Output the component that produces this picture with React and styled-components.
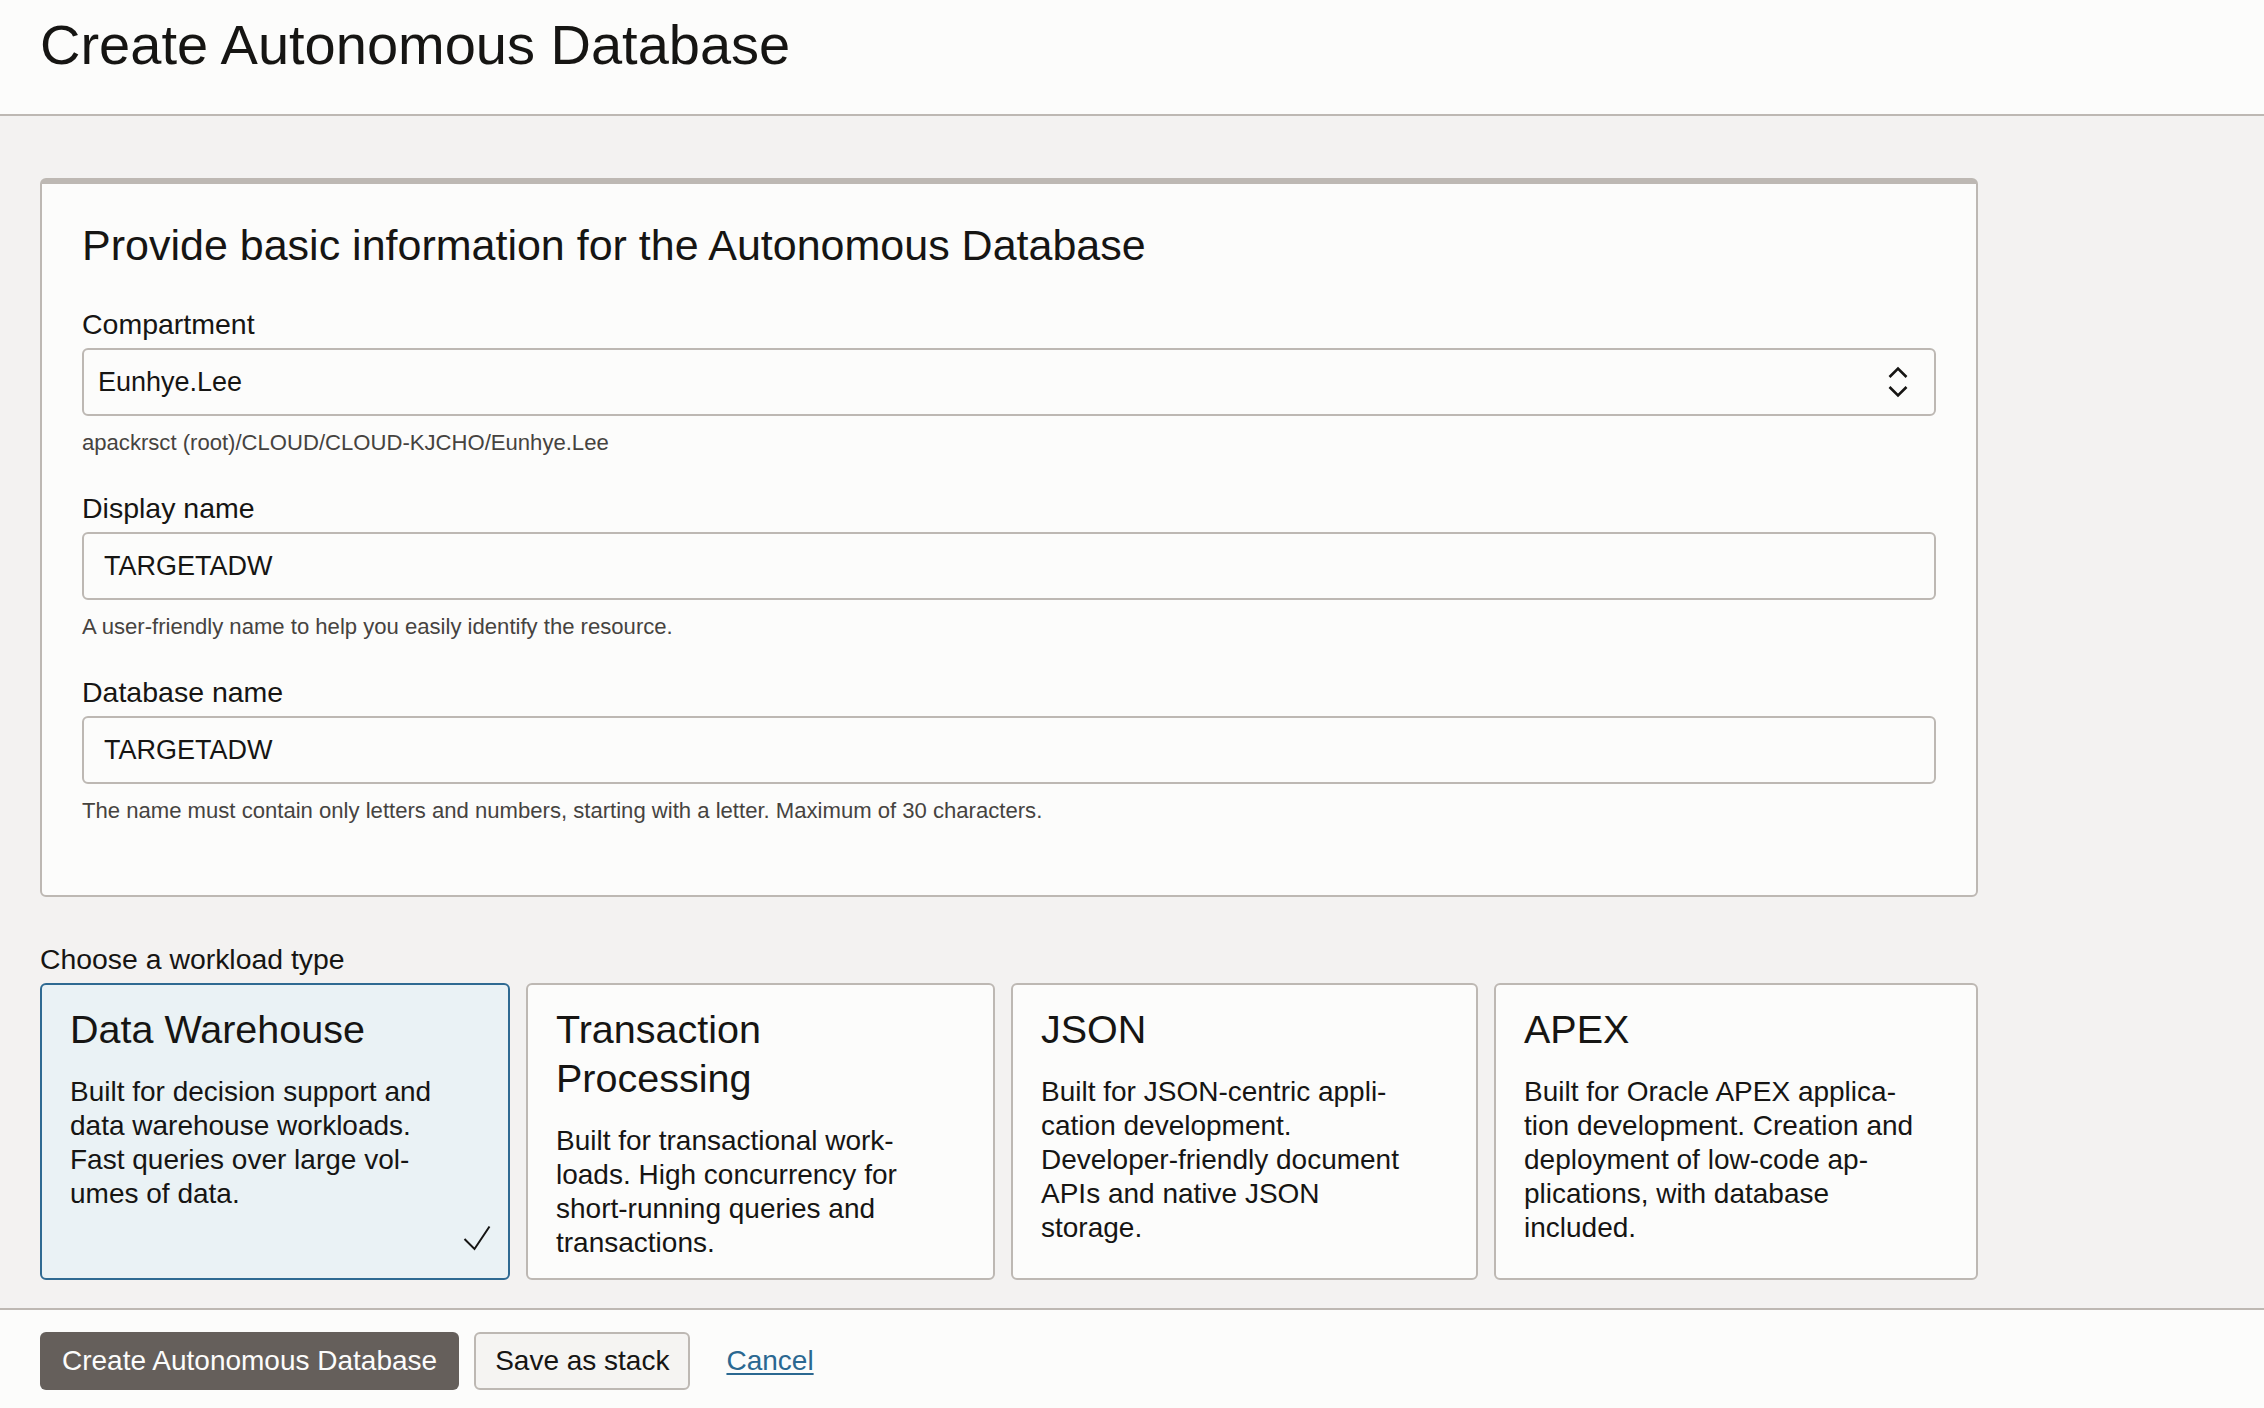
import styled, { createGlobalStyle } from 'styled-components';

const GlobalStyle = createGlobalStyle`
  html, body {
    margin: 0;
    padding: 0;
  }
  body {
    font-family: 'Liberation Sans', Arial, Helvetica, sans-serif;
    color: #161513;
    background: #f3f2f1;
  }
  * {
    box-sizing: border-box;
  }
`;

const Page = styled.div`
  display: flex;
  flex-direction: column;
  height: 100vh;
  overflow: hidden;
`;

const Header = styled.header`
  background: #fcfcfb;
  border-bottom: 2px solid #bdb8b3;
  padding: 13px 40px 37px;
`;

const Title = styled.h1`
  margin: 0;
  font-size: 56px;
  line-height: 64px;
  font-weight: 400;
`;

const Main = styled.main`
  flex: 1;
  padding: 62px 40px 0;
  overflow: hidden;
`;

const Content = styled.div`
  width: 1938px;
  display: flex;
  flex-direction: column;
`;

const Panel = styled.section`
  background: #fcfcfb;
  border: 2px solid #bdb8b3;
  border-top-width: 6px;
  border-radius: 6px;
  padding: 36px 40px 70px;
  display: flex;
  flex-direction: column;
`;

const PanelHeading = styled.h2`
  margin: 0 0 37px;
  font-size: 43px;
  line-height: 50px;
  font-weight: 400;
`;

const Fields = styled.div`
  display: flex;
  flex-direction: column;
  gap: 34px;
`;

const Field = styled.div`
  display: flex;
  flex-direction: column;
`;

const Label = styled.label`
  font-size: 28.5px;
  line-height: 34px;
  margin-bottom: 7px;
`;

const SelectBox = styled.div`
  height: 68px;
  border: 2px solid #bdb8b3;
  border-radius: 6px;
  background: #fcfcfb;
  display: flex;
  align-items: center;
  justify-content: space-between;
  padding: 0 26px 0 14px;
  font-size: 27px;
`;

const TextInput = styled.input`
  height: 68px;
  border: 2px solid #bdb8b3;
  border-radius: 6px;
  background: #fcfcfb;
  padding: 0 20px;
  font-family: inherit;
  font-size: 27px;
  color: #161513;
  outline: none;
`;

const Helper = styled.div`
  margin-top: 13px;
  font-size: 22.1px;
  line-height: 28px;
  color: #46433f;
`;

const SectionLabel = styled.div`
  margin-top: 45px;
  font-size: 28.4px;
  line-height: 34px;
`;

const CardGrid = styled.div`
  margin-top: 7px;
  display: grid;
  grid-template-columns: 470px 469px 467px 1fr;
  gap: 16px;
`;

const Card = styled.div`
  position: relative;
  border: 2px solid ${(p) => (p.$selected ? '#2f6a92' : '#bdb8b3')};
  background: ${(p) => (p.$selected ? '#eaf2f5' : '#fcfcfb')};
  border-radius: 6px;
  padding: 20px 57px 18px 28px;
`;

const CardTitle = styled.div`
  font-size: 39.5px;
  line-height: 49px;
  margin-bottom: 21px;
`;

const CardText = styled.p`
  margin: 0;
  font-size: 28px;
  line-height: 34px;
`;

const Check = styled.svg`
  position: absolute;
  right: 17px;
  bottom: 27px;
`;

const Footer = styled.footer`
  height: 100px;
  background: #fcfcfb;
  border-top: 2px solid #bdb8b3;
  padding: 22px 40px 0;
  display: flex;
  align-items: flex-start;
`;

const PrimaryButton = styled.button`
  height: 58px;
  padding: 0 22px;
  border: none;
  border-radius: 6px;
  background: #655f5b;
  color: #fcfcfb;
  font-family: inherit;
  font-size: 28px;
`;

const SecondaryButton = styled.button`
  height: 58px;
  margin-left: 15px;
  padding: 0 19px;
  border: 2px solid #bdb8b3;
  border-radius: 6px;
  background: #f5f4f2;
  color: #161513;
  font-family: inherit;
  font-size: 28px;
`;

const CancelLink = styled.a`
  margin-left: 36px;
  line-height: 58px;
  font-size: 28px;
  color: #2b6891;
  text-decoration: underline;
  text-decoration-thickness: 2px;
  text-underline-offset: 3px;
`;

const workloads = [
  {
    title: 'Data Warehouse',
    text: 'Built for decision support and data warehouse workloads. Fast queries over large vol\u00ADumes of data.',
    selected: true,
  },
  {
    title: 'Transaction Processing',
    text: 'Built for transactional work\u00ADloads. High concurrency for short-running queries and transactions.',
  },
  {
    title: 'JSON',
    text: 'Built for JSON-centric appli\u00ADcation development. Developer-friendly document APIs and native JSON storage.',
  },
  {
    title: 'APEX',
    text: 'Built for Oracle APEX applica\u00ADtion development. Creation and deployment of low-code ap\u00ADplications, with database included.',
  },
];

const Chevrons = () => (
  <svg width='20' height='32' viewBox='0 0 20 32' fill='none' stroke='#161513' strokeWidth='2.6'>
    <path d='M1.5 11 L10 2.5 L18.5 11' />
    <path d='M1.5 21 L10 29.5 L18.5 21' />
  </svg>
);

const App = () => {
  return (
    <Page>
      <GlobalStyle />
      <Header>
        <Title>Create Autonomous Database</Title>
      </Header>
      <Main>
        <Content>
          <Panel>
            <PanelHeading>Provide basic information for the Autonomous Database</PanelHeading>
            <Fields>
              <Field>
                <Label>Compartment</Label>
                <SelectBox>
                  <span>Eunhye.Lee</span>
                  <Chevrons />
                </SelectBox>
                <Helper>apackrsct (root)/CLOUD/CLOUD-KJCHO/Eunhye.Lee</Helper>
              </Field>
              <Field>
                <Label>Display name</Label>
                <TextInput defaultValue='TARGETADW' />
                <Helper>A user-friendly name to help you easily identify the resource.</Helper>
              </Field>
              <Field>
                <Label>Database name</Label>
                <TextInput defaultValue='TARGETADW' />
                <Helper>
                  The name must contain only letters and numbers, starting with a letter. Maximum of 30 characters.
                </Helper>
              </Field>
            </Fields>
          </Panel>
          <SectionLabel>Choose a workload type</SectionLabel>
          <CardGrid>
            {workloads.map((w) => (
              <Card key={w.title} $selected={w.selected}>
                <CardTitle>{w.title}</CardTitle>
                <CardText>{w.text}</CardText>
                {w.selected && (
                  <Check width='28' height='26' viewBox='0 0 28 26' fill='none' stroke='#161513' strokeWidth='2'>
                    <path d='M1.5 14 L11.5 24 L26.5 1.5' />
                  </Check>
                )}
              </Card>
            ))}
          </CardGrid>
        </Content>
      </Main>
      <Footer>
        <PrimaryButton>Create Autonomous Database</PrimaryButton>
        <SecondaryButton>Save as stack</SecondaryButton>
        <CancelLink href='#'>Cancel</CancelLink>
      </Footer>
    </Page>
  );
};

export default App;
